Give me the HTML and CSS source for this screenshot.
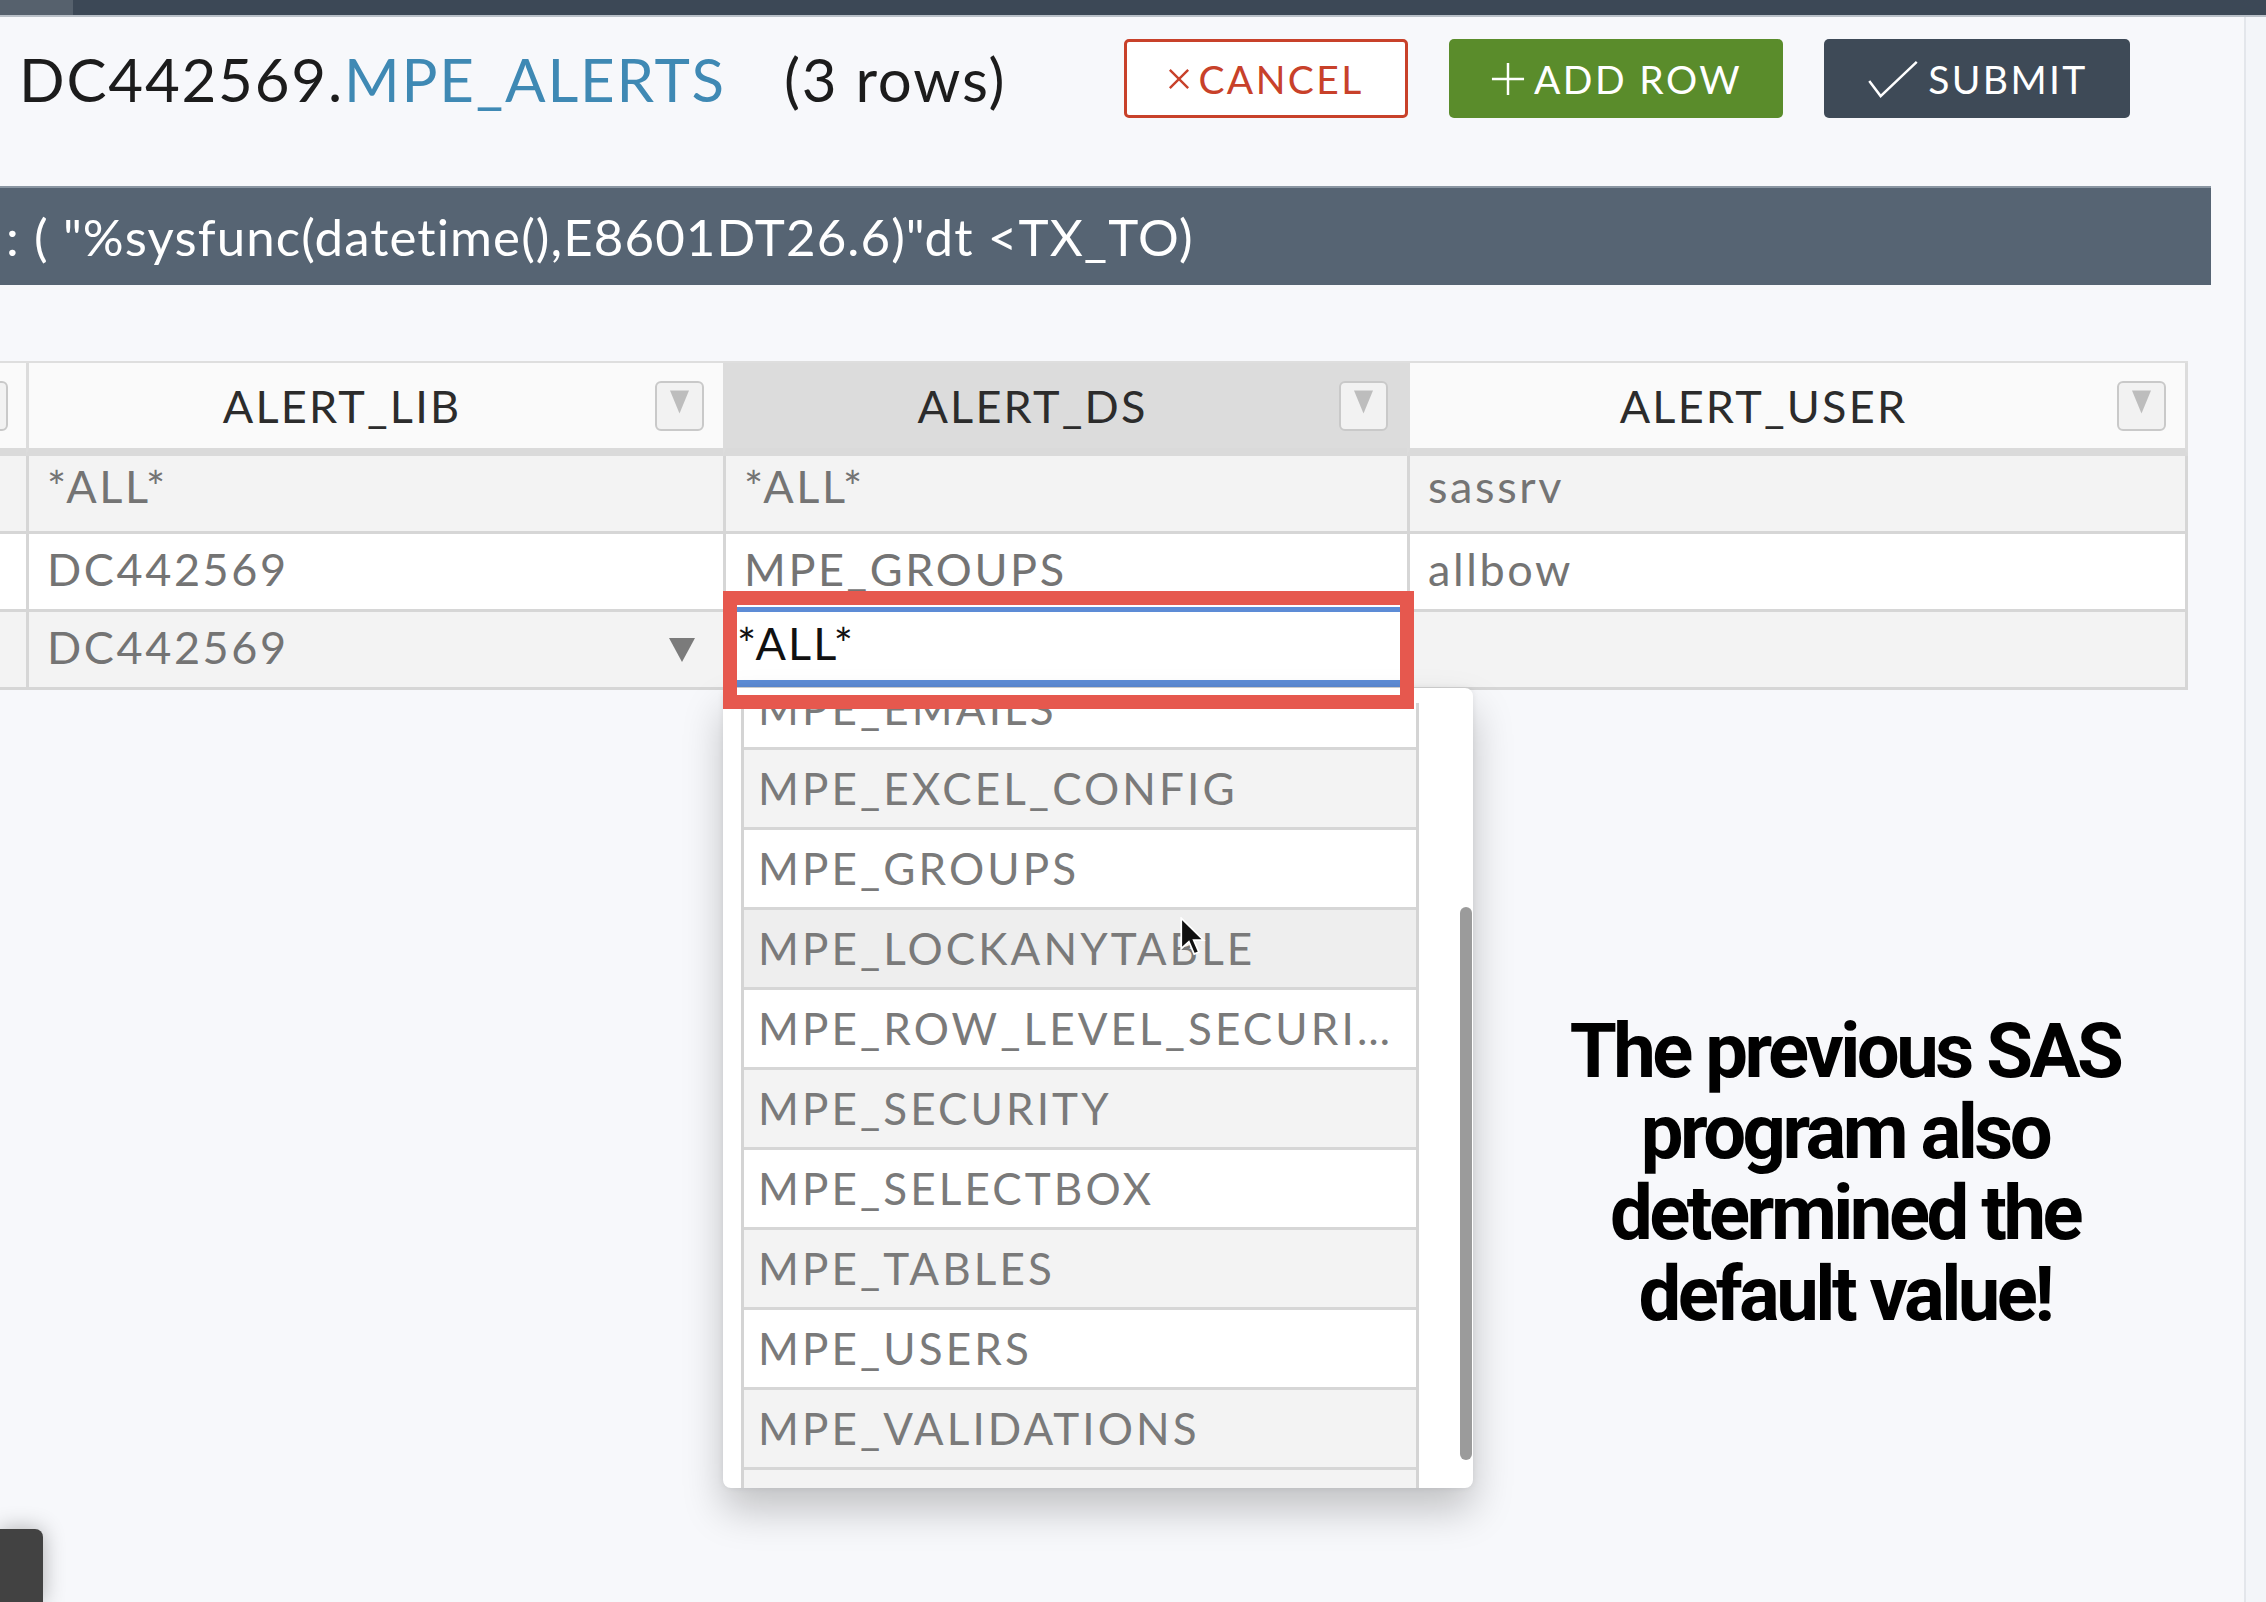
FILE: index.html
```html
<!DOCTYPE html>
<html>
<head>
<meta charset="utf-8">
<link rel="stylesheet" href="styles.css">
</head>
<body>
<div class="topbar"><div class="topbar-left"></div></div>
<div class="page">
  <div class="main">
    <div class="toolbar">
      <h1 class="title">DC442569.<span class="tname">MPE_ALERTS</span><span class="rows">(3 rows)</span></h1>
      <div class="actions">
        <button class="btn btn-cancel">
          <svg class="ico-x" viewBox="0 0 24 24"><path d="M2 2 L22 22 M22 2 L2 22"/></svg>CANCEL
        </button>
        <button class="btn btn-add">
          <svg class="ico-plus" viewBox="0 0 36 36"><path d="M18 1 V35 M1 18 H35"/></svg>ADD ROW
        </button>
        <button class="btn btn-submit">
          <svg class="ico-check" viewBox="0 0 54 40"><path d="M2 22 L14 38 L52 2"/></svg>SUBMIT
        </button>
      </div>
    </div>
    <div class="banner">: ( "%sysfunc(datetime(),E8601DT26.6)"dt &lt;TX_TO)</div>
    <div class="grid">
      <div class="hcell hcell-stub"><span class="filter"><svg viewBox="0 0 20 24"><path d="M0 0 H20 L10 24 Z"/></svg></span></div>
      <div class="hcell"><span class="htext">ALERT_LIB</span><span class="filter"><svg viewBox="0 0 20 24"><path d="M0 0 H20 L10 24 Z"/></svg></span></div>
      <div class="hcell hcell-sel"><span class="htext">ALERT_DS</span><span class="filter"><svg viewBox="0 0 20 24"><path d="M0 0 H20 L10 24 Z"/></svg></span></div>
      <div class="hcell hcell-last"><span class="htext">ALERT_USER</span><span class="filter"><svg viewBox="0 0 20 24"><path d="M0 0 H20 L10 24 Z"/></svg></span></div>

      <div class="cell odd first cell-stub"></div>
      <div class="cell odd first">*ALL*</div>
      <div class="cell odd first">*ALL*</div>
      <div class="cell odd first cell-last">sassrv</div>

      <div class="cell cell-stub"></div>
      <div class="cell">DC442569</div>
      <div class="cell">MPE_GROUPS</div>
      <div class="cell cell-last">allbow</div>

      <div class="cell odd cell-stub"></div>
      <div class="cell odd cell-select"><span>DC442569</span><svg class="caret" viewBox="0 0 26 24"><path d="M0 0 H26 L13 24 Z"/></svg></div>
      <div class="cell odd cell-edit"><div class="editor">*ALL*</div></div>
      <div class="cell odd cell-last"></div>
    </div>
  </div>
  <div class="side"></div>
</div>

<div class="dropdown">
  <div class="list">
    <div class="list-inner">
      <div class="item">MPE_EMAILS</div>
      <div class="item alt">MPE_EXCEL_CONFIG</div>
      <div class="item">MPE_GROUPS</div>
      <div class="item hover">MPE_LOCKANYTABLE</div>
      <div class="item">MPE_ROW_LEVEL_SECURITY</div>
      <div class="item alt">MPE_SECURITY</div>
      <div class="item">MPE_SELECTBOX</div>
      <div class="item alt">MPE_TABLES</div>
      <div class="item">MPE_USERS</div>
      <div class="item alt">MPE_VALIDATIONS</div>
      <div class="item alt"></div>
    </div>
  </div>
  <div class="track"><div class="thumb"></div></div>
</div>

<div class="highlight"></div>

<svg class="cursor" viewBox="0 0 22 34"><path d="M1 1 L1 27 L7.5 21 L12 31.5 L16 29.8 L11.6 19.6 L20 19.6 Z"/></svg>

<p class="note">The previous SAS program also determined the default value!</p>

<div class="corner"></div>
</body>
</html>
```

FILE: styles.css
```css
html, body {
  margin: 0;
  padding: 0;
}
body {
  width: 2266px;
  height: 1602px;
  overflow: hidden;
  background: #f7f8fb;
  font-family: "Lato", "Open Sans", sans-serif;
  position: relative;
}
.topbar {
  height: 15px;
  background: #3c4856;
  border-bottom: 2px solid #b9c0c8;
  display: flex;
}
.topbar-left {
  width: 73px;
  background: #56616d;
}
.page {
  display: flex;
}
.main {
  width: 2244px;
}
.side {
  flex: 1;
  border-left: 2px solid #e3e6eb;
  background: #f3f5f9;
  height: 1585px;
}
.toolbar {
  display: grid;
  grid-template-columns: 1105px auto;
  align-items: center;
  padding: 22px 0 0 19px;
  height: 79px;
}
.title {
  margin: 0;
  font-weight: 400;
  font-size: 60px;
  letter-spacing: 1.8px;
  color: #1c1c1c;
  white-space: nowrap;
}
.tname {
  color: #3f89b4;
}
.rows {
  margin-left: 58px;
}
.actions {
  display: flex;
  gap: 41px;
}
.btn {
  height: 79px;
  border-radius: 5px;
  display: flex;
  align-items: center;
  justify-content: center;
  gap: 8px;
  font-family: "Lato", sans-serif;
  font-size: 39px;
  letter-spacing: 2.4px;
  font-weight: 400;
  padding: 0;
  box-sizing: border-box;
}
.btn svg {
  fill: none;
  stroke-width: 2.6;
}
.btn-cancel {
  width: 284px;
  background: #fff;
  border: 3px solid #c8412a;
  color: #c8412a;
}
.ico-x {
  width: 22px;
  height: 24px;
  stroke: #c8412a;
}
.btn-add {
  width: 334px;
  background: #5a8c2b;
  border: none;
  color: #fff;
}
.ico-plus {
  width: 36px;
  height: 34px;
  stroke: #fff;
}
.btn-submit {
  width: 306px;
  background: #3e4a57;
  border: none;
  color: #fff;
}
.ico-check {
  width: 54px;
  height: 38px;
  stroke: #fff;
}
.banner {
  margin-top: 68px;
  width: 2211px;
  height: 99px;
  box-sizing: border-box;
  background: #566473;
  border-top: 2px solid #8a96a2;
  color: #fff;
  font-size: 51px;
  letter-spacing: 1.1px;
  display: flex;
  align-items: center;
  padding-left: 6px;
  white-space: nowrap;
}
.grid {
  margin-top: 76px;
  display: grid;
  grid-template-columns: 26px 697px 684px 781px;
  border-top: 2px solid #dedede;
  width: 2188px;
}
.hcell {
  height: 93px;
  box-sizing: border-box;
  border-bottom: 8px solid #dadada;
  border-left: 3px solid #dcdcdc;
  background: #fafafa;
  display: flex;
  align-items: center;
  padding-right: 19px;
  overflow: hidden;
}
.hcell-stub {
  border-left: none;
  padding-right: 0;
  justify-content: flex-end;
}
.hcell-stub .filter {
  margin-right: 18px;
  flex: none;
}
.hcell-sel {
  background: #dcdcdc;
}
.hcell-last {
  border-right: 3px solid #dcdcdc;
}
.htext {
  flex: 1;
  text-align: center;
  font-size: 45px;
  letter-spacing: 2.2px;
  color: #2c2c2c;
}
.filter {
  width: 49px;
  height: 50px;
  box-sizing: border-box;
  border: 2px solid #c9c9c9;
  border-radius: 6px;
  background: #f2f2f2;
  display: flex;
  justify-content: center;
  padding-top: 7px;
  flex: none;
}
.filter svg {
  width: 19px;
  height: 24px;
  fill: #bdbdbd;
}
.cell {
  height: 78px;
  box-sizing: border-box;
  border-bottom: 3px solid #d6d6d6;
  border-left: 3px solid #d6d6d6;
  background: #fff;
  display: flex;
  align-items: center;
  padding: 0 0 5px 18px;
  font-size: 45px;
  letter-spacing: 2.6px;
  color: #747474;
  white-space: nowrap;
}
.cell.odd {
  background: #f3f3f3;
}
.cell.first {
  padding-bottom: 16px;
}
.cell-stub {
  border-left: none;
  padding: 0;
}
.cell-last {
  border-right: 3px solid #d6d6d6;
}
.cell-select {
  justify-content: space-between;
  padding-right: 28px;
}
.caret {
  width: 26px;
  height: 24px;
  fill: #7b7b7b;
  margin-top: 6px;
}
.cell-edit {
  padding: 0;
  align-items: flex-start;
}
.editor {
  width: 100%;
  height: 80px;
  margin-top: -5px;
  box-sizing: border-box;
  background: #fff;
  border-top: 5px solid #5d8cd6;
  border-bottom: 7px solid #5d8cd6;
  color: #111;
  display: flex;
  align-items: center;
  padding-left: 11px;
  padding-bottom: 6px;
  letter-spacing: 2px;
}
.dropdown {
  position: absolute;
  left: 723px;
  top: 688px;
  width: 750px;
  height: 800px;
  box-sizing: border-box;
  padding: 15px 1px 0 18px;
  background: #fff;
  border-radius: 8px;
  box-shadow: 0 22px 40px rgba(0, 0, 0, 0.22), 0 0 6px rgba(0, 0, 0, 0.08);
  display: flex;
  justify-content: space-between;
  z-index: 2;
}
.list {
  width: 678px;
  height: 785px;
  overflow: hidden;
  border-left: 3px solid #d4d4d4;
  border-right: 3px solid #d4d4d4;
  box-sizing: border-box;
}
.list-inner {
  margin-top: -33px;
}
.item {
  height: 80px;
  box-sizing: border-box;
  border-bottom: 3px solid #d6d6d6;
  background: #fff;
  display: block;
  padding: 0 12px 0 14px;
  font-size: 44px;
  line-height: 77px;
  letter-spacing: 3.1px;
  color: #7a7a7a;
  white-space: nowrap;
  overflow: hidden;
  text-overflow: ellipsis;
}
.item.alt {
  background: #f3f3f3;
}
.item.hover {
  background: #eeeeee;
}
.track {
  width: 12px;
  padding-top: 204px;
}
.thumb {
  height: 553px;
  background: #9b9b9b;
  border-radius: 6px;
}
.highlight {
  position: absolute;
  left: 723px;
  top: 591px;
  width: 691px;
  height: 118px;
  box-sizing: border-box;
  border: 14px solid #e6584e;
  z-index: 3;
}
.cursor {
  position: absolute;
  left: 1180px;
  top: 917px;
  width: 26px;
  height: 40px;
  fill: #111;
  stroke: #fff;
  stroke-width: 1.5;
  z-index: 4;
}
.note {
  position: absolute;
  left: 1530px;
  top: 1011px;
  width: 630px;
  margin: 0;
  text-align: center;
  font-family: "Roboto", sans-serif;
  font-weight: 700;
  font-size: 76px;
  line-height: 81px;
  letter-spacing: -3.5px;
  color: #000;
}
.corner {
  position: absolute;
  left: 0;
  top: 1529px;
  width: 43px;
  height: 73px;
  background: #424242;
  border-top-right-radius: 8px;
  box-shadow: 0 0 22px rgba(0, 0, 0, 0.3);
}
```
